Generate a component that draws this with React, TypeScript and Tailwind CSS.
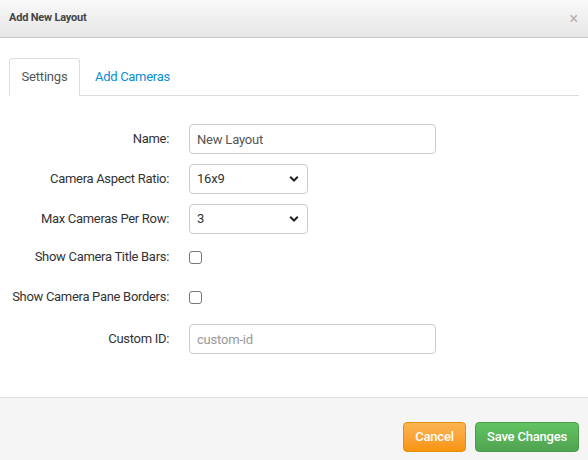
import { useState } from "react";

function Chevron() {
  return (
    <svg
      className="pointer-events-none absolute right-[9px] top-1/2 -translate-y-1/2"
      width="10"
      height="7"
      viewBox="0 0 10 7"
    >
      <path d="M1.2 1.3 L5 5 L8.8 1.3" fill="none" stroke="#222" strokeWidth="2" />
    </svg>
  );
}

function Row({ label, h, children }: { label: string; h: string; children: React.ReactNode }) {
  return (
    <div className={`flex items-center ${h}`}>
      <div className="w-[170px] shrink-0 whitespace-nowrap pr-px text-right text-[13px] tracking-[-0.3px] text-[#333]">
        {label}
      </div>
      <div className="ml-[19px] flex items-center">{children}</div>
    </div>
  );
}

export default function App() {
  const [tab, setTab] = useState("settings");
  const [name, setName] = useState("New Layout");

  return (
    <div
      className="flex h-[460px] w-[588px] flex-col bg-white"
      style={{ fontFamily: "Roboto, 'Liberation Sans', sans-serif" }}
    >
      {/* header */}
      <div className="flex h-[38px] shrink-0 items-center justify-between border-b border-[#c8c8c8] bg-gradient-to-b from-[#f9f9f9] to-[#e6e6e6] pl-[9px] pr-[10px]">
        <span className="text-[11px] font-bold tracking-[-0.2px] text-[#444]">Add New Layout</span>
        <span className="text-[16px] leading-none text-[#b0b0b0]">×</span>
      </div>

      {/* tabs */}
      <div className="mx-[9px] mt-[20px] flex h-[38px] border-b border-[#ddd]">
        <button
          onClick={() => setTab("settings")}
          className="-mb-px h-[38px] w-[71px] rounded-t-[4px] border border-[#ddd] border-b-white bg-white text-[13px] tracking-[-0.2px] text-[#555]"
        >
          Settings
        </button>
        <button
          onClick={() => setTab("cameras")}
          className="ml-[1px] h-[38px] px-[14px] text-[13px] tracking-[-0.3px] text-[#0b8ed4]"
        >
          Add Cameras
        </button>
      </div>

      {/* form */}
      <div className="mt-[23px] flex flex-col">
        <Row label="Name:" h="h-[40px]">
          <input
            value={name}
            onChange={(e) => setName(e.target.value)}
            className="h-[30px] w-[247px] rounded-[4px] border border-[#ccc] px-[7px] text-[13px] tracking-[-0.2px] text-[#555] outline-none"
          />
        </Row>
        <Row label="Camera Aspect Ratio:" h="h-[40px]">
          <div className="relative">
            <select className="h-[30px] w-[119px] appearance-none rounded-[4px] border border-[#ccc] bg-white px-[7px] text-[13px] tracking-[-0.2px] text-[#333] outline-none">
              <option>16x9</option>
              <option>4x3</option>
            </select>
            <Chevron />
          </div>
        </Row>
        <Row label="Max Cameras Per Row:" h="h-[40px]">
          <div className="relative">
            <select className="h-[30px] w-[119px] appearance-none rounded-[4px] border border-[#ccc] bg-white px-[7px] text-[13px] tracking-[-0.2px] text-[#333] outline-none">
              <option>3</option>
              <option>4</option>
            </select>
            <Chevron />
          </div>
        </Row>
        <Row label="Show Camera Title Bars:" h="h-[36px]">
          <input type="checkbox" className="h-[13px] w-[13px] appearance-none rounded-[3px] border border-[#767676] bg-white" />
        </Row>
        <Row label="Show Camera Pane Borders:" h="h-[44px]">
          <input type="checkbox" className="h-[13px] w-[13px] appearance-none rounded-[3px] border border-[#767676] bg-white" />
        </Row>
        <Row label="Custom ID:" h="h-[40px]">
          <input
            placeholder="custom-id"
            className="h-[30px] w-[247px] rounded-[4px] border border-[#ccc] px-[7px] text-[13px] tracking-[-0.2px] text-[#555] outline-none placeholder:text-[#999]"
          />
        </Row>
      </div>

      {/* footer */}
      <div className="mt-auto flex h-[63px] shrink-0 items-start justify-end gap-[9px] border-t border-[#ddd] bg-[#f5f5f5] pr-[9px] pt-[24px]">
        <button className="h-[30px] w-[63px] rounded-[4px] border border-[#e0900f] bg-gradient-to-b from-[#fbb450] to-[#f89406] text-[13px] font-medium tracking-[-0.2px] text-white">
          Cancel
        </button>
        <button className="h-[30px] w-[104px] rounded-[4px] border border-[#4a9a4a] bg-gradient-to-b from-[#62c462] to-[#51a351] text-[13px] font-medium tracking-[-0.2px] text-white">
          Save Changes
        </button>
      </div>
      {tab === "cameras" && null}
    </div>
  );
}
